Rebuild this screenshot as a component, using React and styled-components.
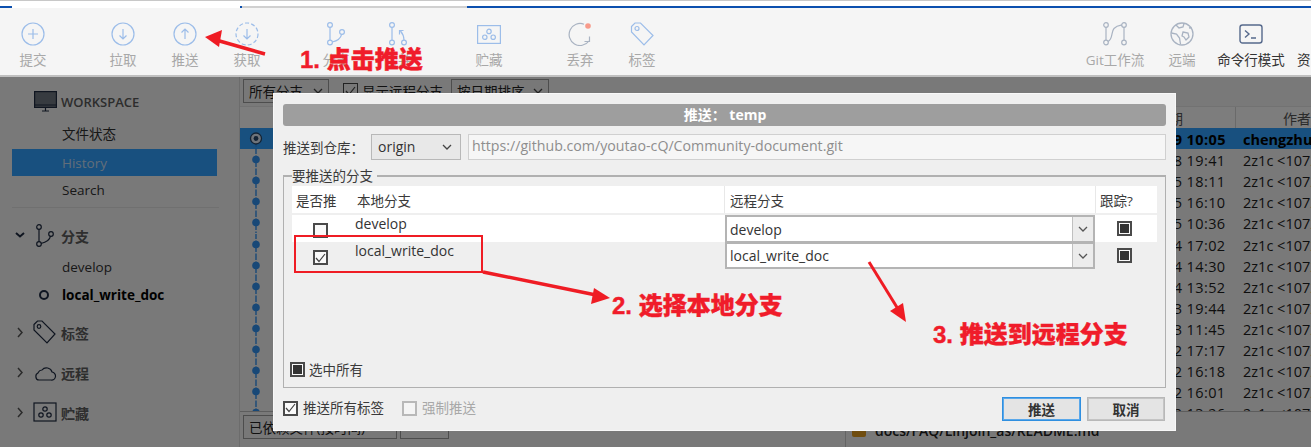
import React from "react";
import styled, { createGlobalStyle } from "styled-components";

const Global = createGlobalStyle`
  html, body { margin: 0; padding: 0; background: #f3f3f3; }
  body { width: 1311px; height: 447px; overflow: hidden; font-family: "Open Sans", "Noto Sans CJK SC", sans-serif; font-size: 13px; color: #333; }
  * { box-sizing: border-box; }
`;

const Frame = styled.div`position: relative; width: 1311px; height: 447px; overflow: hidden; display: flex; flex-direction: column;`;
const TopStrip = styled.div`height: 8px; flex: none; background: #fff; border-top: 1px solid #c8c8c8; display: flex; align-items: flex-end;`;
const Tab = styled.div`height: 2px; width: ${p => p.$w}px; flex: ${p => p.$grow ? 1 : "none"}; background: ${p => p.$c || "#0b4fae"};`;
const Toolbar = styled.div`height: 69px; flex: none; background: #f5f5f5; border-bottom: 2px solid #c0c0c0; display: flex; padding-left: 2px; overflow: hidden;`;
const ToolItem = styled.div`
  flex: none; width: ${p => p.$w || 62}px; margin-left: ${p => p.$ml || 0}px;
  display: flex; flex-direction: column; align-items: ${p => p.$start ? "flex-start" : "center"}; padding-top: 14px; padding-left: ${p => p.$start ? 9 : 0}px; white-space: nowrap;
  color: ${p => p.$on ? "#333" : "#a8a8a8"}; font-size: 13.5px; line-height: 20px;
  svg { display: block; margin-bottom: 4px; }
`;
const Spring = styled.div`flex: 1;`;

const Body = styled.div`flex: 1; display: flex; min-height: 0;`;
const Side = styled.aside`width: 240px; flex: none; border-right: 1px solid #d8d8d8; display: flex; flex-direction: column; padding-left: 12px; padding-right: 21px;`;
const WorkspaceHead = styled.div`height: 37px; margin-top: 6px; padding-left: 22px; display: flex; align-items: center; gap: 4px; color: #5a5a5a; font-weight: 600; font-size: 13px;`;
const SideLink = styled.div`height: 27px; margin-top: ${p => p.$mt || 0}px; display: flex; align-items: center; padding-left: 50px; width: 205px; background: ${p => p.$sel ? "#30a0fe" : "none"}; color: ${p => p.$bold ? "#000" : p.$sel ? "#c4dcf4" : "#303030"}; font-weight: ${p => p.$bold ? 700 : 400}; font-size: 13.5px; position: relative;`;
const CurrentDot = styled.span`position: absolute; left: 27px; top: 9px; width: 10px; height: 10px; border: 2px solid #1f2c44; border-radius: 50%;`;
const SideDivider = styled.div`height: 1px; background: #e0e0e0; margin-top: 4px; width: 207px;`;
const SideHead = styled.div`height: 30px; margin-top: ${p => p.$mt || 0}px; display: flex; align-items: center; color: #5c5c5c; font-weight: 700; font-size: 14px; white-space: nowrap;
  svg { flex: none; }
`;
const SideHeadText = styled.span`margin-left: 1px;`;

const Main = styled.main`flex: 1; display: flex; flex-direction: column; min-width: 0;`;
const FilterBar = styled.div`height: 29px; flex: none; display: flex; align-items: flex-start; padding: 2px 0 0 3px; font-size: 13.5px; color: #222;`;
const MiniSelect = styled.div`width: ${p => p.$w}px; height: 24px; margin-left: ${p => p.$ml || 0}px; border: 1px solid #9a9a9a; display: flex; align-items: center; justify-content: space-between; padding: 0 5px; background: #f0f0f0;`;
const HeadRow = styled.div`height: 22px; flex: none; background: #fafafa; border-top: 1px solid #e4e4e4; display: flex; font-size: 14px; color: #555; justify-content: flex-end; align-items: center;`;
const HeadCell = styled.div`width: ${p => p.$w}px; height: 100%; display: flex; align-items: center; justify-content: flex-end; padding-right: ${p => p.$pr || 0}px; border-left: ${p => p.$line ? "1px solid #d4d4d4" : "none"}; flex: none; overflow: hidden; white-space: nowrap;`;
const Rows = styled.div`height: 284px; flex: none; display: flex; flex-direction: column; overflow: hidden; border-bottom: 1px solid #bbb; position: relative;`;
const Row = styled.div`height: 21.1px; flex: none; display: flex; align-items: center; padding-left: 4px; background: ${p => p.$sel ? "#30a0fe" : "none"}; color: ${p => p.$sel ? "#000" : "#1c1c1c"}; font-weight: ${p => p.$sel ? 700 : 400}; font-size: 14.5px; white-space: nowrap;`;
const GraphCell = styled.div`width: 24px; flex: none; display: flex; justify-content: center;`;
const Spacer = styled.div`flex: 1;`;
const DateCell = styled.div`width: 63px; flex: none; overflow: hidden; padding-top: 2px; letter-spacing: .4px;`;
const AuthorCell = styled.div`width: 83px; padding: 2px 0 0 15px; flex: none; overflow: hidden;`;
const StatusBar = styled.div`flex: 1; display: flex; padding: 3px 0 0 3px; position: relative; font-size: 13.5px; color: #222;`;
const FileRef = styled.div`position: absolute; left: 605px; top: 0; bottom: 0; border-left: 1px solid #c8c8c8; padding: 11px 0 0 6px; display: flex; gap: 9px; align-items: flex-start; font-weight: 600; font-size: 14px; line-height: 16px; color: #222;`;
const FileTag = styled.span`width: 14px; height: 12px; margin-top: 2px; border-radius: 2px; background: #e09a1e; display: block;`;

const Scrim = styled.div`position: absolute; left: 0; right: 0; top: 77px; bottom: 0; background: rgba(0,0,0,.5);`;

const Dialog = styled.section`position: absolute; left: 273px; top: 93px; width: 903px; height: 338px; background: #efefef; border: 1px solid #f8f8f8; padding: 10px 9px 0 9px; display: flex; flex-direction: column; font-size: 13.5px; color: #3a3a3a;`;
const TitleBar = styled.div`height: 22px; flex: none; background: #9e9e9e; border-radius: 3px; color: #fff; font-weight: 700; font-size: 14px; line-height: 20px; display: flex; align-items: center; justify-content: center; padding: 0 0 1px 1px;`;
const RepoRow = styled.div`flex: none; height: 27px; margin-top: 7px; display: flex; align-items: center; white-space: nowrap;`;
const RepoLabel = styled.span`width: 88px; flex: none;`;
const RepoSelect = styled.div`width: 90px; height: 26px; flex: none; border: 1px solid #b8b8b8; background: #e8e8e8; display: flex; align-items: center; justify-content: space-between; padding: 0 8px 0 6px; color: #333; font-size: 14px;`;
const UrlBox = styled.div`flex: 1; height: 26px; margin-left: 7px; border: 1px solid #d0d0d0; background: #f6f6f6; display: flex; align-items: center; padding: 0 3px 3px; color: #8e8e8e; font-size: 14.2px;`;
const Group = styled.fieldset`flex: none; height: 219px; margin: 9px 0 0 0; padding: 0 8px 0 8px; border: 1px solid #b0b0b0; border-top-width: 2px; display: flex; flex-direction: column; min-inline-size: 0;`;
const GroupTitle = styled.legend`font-size: 13.5px; padding: 0 4px 0 0; line-height: 14px;`;
const TableHead = styled.div`height: 27px; margin-top: 3px; flex: none; background: #fff; display: flex; align-items: center;`;
const Cell = styled.div`width: ${p => p.$w}px; flex: none; padding-left: ${p => p.$pl || 0}px; height: 100%; display: flex; align-items: center; border-left: ${p => p.$line ? "1px solid #e8e8e8" : "none"}; white-space: nowrap;`;
const BranchRow = styled.div`height: 27px; margin-top: ${p => p.$mt || 0}px; flex: none; display: flex; background: ${p => p.$white ? "#fff" : "none"};`;
const CheckCell = styled.div`width: 63px; flex: none; display: flex; justify-content: center; padding: 8px 6px 0 0;`;
const NameCell = styled.div`width: 370px; flex: none; line-height: 18px; white-space: nowrap; color: #333; font-size: 14px;`;
const Combo = styled.div`width: 370px; height: 27px; flex: none; border: 2px solid #b4b4b4; border-bottom-width: ${p => p.$last ? 2 : 1}px; background: #fff; display: flex; align-items: center; justify-content: space-between; padding-left: 3px; color: #333; font-size: 14px;`;
const ComboArrow = styled.div`width: 21px; height: 100%; background: #ececec; border-left: 1px solid #c0c0c0; display: flex; align-items: center; justify-content: center;`;
const TrackCell = styled.div`flex: 1; display: flex; align-items: center; justify-content: center; padding-right: 4px;`;
const SelectAll = styled.div`margin-top: 90px; margin-left: -2px; display: flex; align-items: center; gap: 4px;`;
const Footer = styled.div`flex: 1; display: flex; align-items: flex-start; padding-top: 9px;`;
const CheckLabel = styled.label`display: flex; align-items: center; gap: 5px; margin-left: ${p => p.$ml || 0}px; margin-top: 3px; line-height: 16px; color: ${p => p.$off ? "#a8a8a8" : "#3a3a3a"};`;
const DlgButton = styled.button`width: ${p => p.$w || 79}px; height: 24px; margin-left: ${p => p.$ml || 0}px; margin-right: ${p => p.$mr || 0}px; background: #e4e4e4; border: 1px solid ${p => p.$primary ? "#2f8fe0" : "#b8b8b8"}; box-shadow: ${p => p.$primary ? "inset 0 0 0 1px #5aa8ea" : "inset 0 0 0 1px #c4c4c4"}; font: 700 13.5px "Open Sans", "Noto Sans CJK SC", sans-serif; color: #333; padding: 0;`;

const BoxCheck = styled.span`width: 15px; height: 15px; flex: none; border: 2px solid ${p => p.$off ? "#b8b8b8" : "#4a4a4a"}; background: ${p => p.$off ? "#f4f4f4" : "#fafafa"}; display: flex; align-items: center; justify-content: center;`;
const Square = styled.span`width: 9px; height: 9px; background: #333; display: block;`;
const FilterCheck = styled.span`width: 15px; height: 15px; margin: 4px 4px 0 14px; flex: none; border: 1.5px solid #444; background: #f0f0f0; display: flex; align-items: center; justify-content: center;`;
const FilterText = styled.span`width: 89px; margin-top: 2px; flex: none; white-space: nowrap; overflow: hidden;`;

const Note = styled.div`position: absolute; left: ${p => p.$x}px; top: ${p => p.$y}px; color: #f01c2a; font-weight: 900; font-size: 24px; line-height: 30px; white-space: nowrap; font-family: "Liberation Sans", "Noto Sans CJK SC", sans-serif; -webkit-text-stroke: .4px #f01c2a;`;
const RedBox = styled.div`position: absolute; left: 294px; top: 235px; width: 189px; height: 38px; border: 2px solid #ef1c24;`;
const ArrowLayer = styled.svg`position: absolute; left: 0; top: 0; pointer-events: none;`;

const blue = "#9cbde9";
const Ic = ({ children }) => <svg width="24" height="24" viewBox="0 0 24 24" fill="none" stroke={blue} strokeWidth="1.2">{children}</svg>;
const Chevron = ({ c = "#444" }) => <svg width="10" height="6" viewBox="0 0 10 6" fill="none" stroke={c} strokeWidth="1.3"><path d="M1 1l4 4 4-4" /></svg>;
const Tick = ({ c = "#444" }) => <svg width="11" height="10" viewBox="0 0 11 10" fill="none" stroke={c} strokeWidth="1.2"><path d="M1 5l3 3.5L10 1" /></svg>;

const dates = ["09 10:05","08 19:41","05 18:11","05 16:10","05 10:36","04 17:02","04 14:30","04 13:52","03 19:44","03 11:45","02 17:17","02 16:18","02 16:01","02 13:26"];

function Graph({ first }) {
  return (
    <svg width="14" height="21" viewBox="0 0 14 21" style={{ display: "block" }}>
      <path d={first ? "M7 14v7" : "M7 0v21"} stroke="#3090ee" strokeWidth="1.4" strokeDasharray="5 1.5" />
      {first
        ? <><circle cx="7" cy="10.5" r="5.5" fill="#dfe9f5" stroke="#26476a" strokeWidth="1.3" /><circle cx="7" cy="10.5" r="2.4" fill="#26476a" /></>
        : <circle cx="7" cy="10.5" r="3.8" fill="#3090ee" />}
    </svg>
  );
}

export default function App() {
  return (
    <Frame>
      <Global />
      <TopStrip>
        <Tab $w={12} />
        <Tab $w={228} $c="#fff" />
        <Tab $w={2} />
        <Tab $w={225} $c="#d0d0d0" />
        <Tab $grow />
      </TopStrip>
      <Toolbar>
        <ToolItem>
          <Ic><circle cx="12" cy="12" r="11" /><path d="M12 7v10M7 12h10" /></Ic>提交
        </ToolItem>
        <ToolItem $ml={28}>
          <Ic><circle cx="12" cy="12" r="11" /><path d="M12 7v10M8.5 13.5L12 17l3.500-3.500" /></Ic>拉取
        </ToolItem>
        <ToolItem>
          <Ic><circle cx="12" cy="12" r="11" /><path d="M12 17V7M8.500 10.500L12 7l3.500 3.500" /></Ic>推送
        </ToolItem>
        <ToolItem>
          <Ic><circle cx="12" cy="12" r="11" strokeDasharray="4 2.2" /><path d="M12 7v10M8.500 13.500L12 17l3.500-3.500" /></Ic>获取
        </ToolItem>
        <ToolItem $ml={27}>
          <Ic>
            <circle cx="6" cy="3" r="2.400" /><circle cx="6" cy="20.500" r="2.400" /><circle cx="18" cy="10" r="2.400" />
            <path d="M6 5.400v12.700M8.200 20c5-1 8.600-4 9.400-7.600" />
          </Ic>分支
        </ToolItem>
        <ToolItem>
          <Ic>
            <circle cx="6" cy="3" r="2.400" /><circle cx="6" cy="20.500" r="2.400" /><circle cx="18" cy="20.500" r="2.400" />
            <path d="M6 5.400v12.700M18 18c0-4-1-6-3.500-9M13.500 12.500V8.500h4" />
          </Ic>合并
        </ToolItem>
        <ToolItem $ml={29}>
          <Ic>
            <rect x=".6" y="3.600" width="22.800" height="17.800" />
            <circle cx="12" cy="9.400" r="2.200" /><circle cx="7.800" cy="15.200" r="2.200" /><circle cx="16.200" cy="15.200" r="2.200" />
          </Ic>贮藏
        </ToolItem>
        <ToolItem $ml={29}>
          <svg width="24" height="24" viewBox="0 0 24 24" fill="none" stroke="#a9b3c2" strokeWidth="1.2">
            <path d="M16 2.200A11 11 0 1 0 21 19" /><path d="M16.500 19.500H21.500V14.500" />
            <circle cx="20" cy="4" r="2.800" fill="#f79a8a" stroke="none" />
          </svg>丢弃
        </ToolItem>
        <ToolItem>
          <Ic>
            <path d="M1.500 4.500L5 1h5.500l12.500 12.500-9 9.500L1.500 10z" /><circle cx="7" cy="6.500" r="2" />
          </Ic>标签
        </ToolItem>
        <Spring />
        <ToolItem $w={70}>
          <svg width="24" height="24" viewBox="0 0 24 24" fill="none" stroke="#a9b3c2" strokeWidth="1.2">
            <circle cx="3" cy="3" r="2.300" /><circle cx="3" cy="20.500" r="2.300" /><circle cx="21" cy="3" r="2.300" /><circle cx="21" cy="20.500" r="2.300" />
            <path d="M3 5.300v13M21 5.300v13M5 19.500c5-2 3-10 6-13s5-3 8-3.500" />
          </svg>Git工作流
        </ToolItem>
        <ToolItem $w={64}>
          <svg width="24" height="24" viewBox="0 0 24 24" fill="none" stroke="#a9b3c2" strokeWidth="1.300">
            <circle cx="12" cy="12" r="11" />
            <path d="M6 3l3 3 4-1 1-3.500M1.500 11l5 1 3 4 1 6M13 10l5 1 1 4-3 3-2-3-2-1zM19 6l2.500-.5" />
          </svg>远端
        </ToolItem>
        <ToolItem $w={74} $on>
          <svg width="24" height="24" viewBox="0 0 24 24" fill="none" stroke="#56698c" strokeWidth="1.400">
            <rect x="1" y="3" width="22" height="18" rx="2.500" /><path d="M6 8.500l4 3.500-4 3.500M12 16h5" />
          </svg>命令行模式
        </ToolItem>
        <ToolItem $w={23} $on $start>
          <svg width="1" height="24" />资
        </ToolItem>
      </Toolbar>

      <Body>
        <Side>
          <WorkspaceHead>
            <svg width="23" height="21" viewBox="0 0 23 21" fill="none" stroke="#1e2a40" strokeWidth="1.200">
              <rect x=".6" y=".6" width="21.800" height="15.800" fill="#6f7780" /><path d="M.6 14h21.800M8 20h7M11.500 17v3" />
            </svg>
            <span>WORKSPACE</span>
          </WorkspaceHead>
          <SideLink $mt={-1}>文件状态</SideLink>
          <SideLink $mt={3} $sel>History</SideLink>
          <SideLink>Search</SideLink>
          <SideDivider />
          <SideHead $mt={13}>
            <svg width="48" height="26" viewBox="0 0 48 26" fill="none" stroke="#1e2a40" strokeWidth="1.200">
              <path d="M4 10l4 3.500L12 10" strokeWidth="2" />
              <circle cx="27" cy="4" r="2.300" /><circle cx="27" cy="21" r="2.300" /><circle cx="39" cy="11" r="2.300" />
              <path d="M27 6.300v12.400M29 20.500c5-1 8.800-4 9.500-7.300" />
            </svg>
            <SideHeadText>分支</SideHeadText>
          </SideHead>
          <SideLink $mt={2}>develop</SideLink>
          <SideLink $mt={1} $bold><CurrentDot />local_write_doc</SideLink>
          <SideHead $mt={10}>
            <svg width="48" height="26" viewBox="0 0 48 26" fill="none" stroke="#1e2a40" strokeWidth="1.200">
              <path d="M6 8l4 4.500L6 17" stroke="#555" strokeWidth="1.500" />
              <path d="M22 4.500L25.500 1H30l13 13-8 9-13-13z" /><circle cx="27" cy="6.500" r="1.800" />
            </svg>
            <SideHeadText>标签</SideHeadText>
          </SideHead>
          <SideHead $mt={10}>
            <svg width="48" height="26" viewBox="0 0 48 26" fill="none" stroke="#1e2a40" strokeWidth="1.200">
              <path d="M6 8l4 4.500L6 17" stroke="#555" strokeWidth="1.500" />
              <path d="M27 20h12a4 4 0 0 0 1-8c-1-4-7-6-10-2-3 0-3 1-4 3-3 1-3 7 1 7z" />
            </svg>
            <SideHeadText>远程</SideHeadText>
          </SideHead>
          <SideHead $mt={10}>
            <svg width="48" height="26" viewBox="0 0 48 26" fill="none" stroke="#1e2a40" strokeWidth="1.200">
              <path d="M6 8l4 4.500L6 17" stroke="#555" strokeWidth="1.500" />
              <rect x="22" y="3" width="22" height="18" />
              <circle cx="33" cy="9" r="2.200" /><circle cx="29" cy="15" r="2.200" /><circle cx="37" cy="15" r="2.200" />
            </svg>
            <SideHeadText>贮藏</SideHeadText>
          </SideHead>
        </Side>
        <Main>
          <FilterBar>
            <MiniSelect $w={86}>所有分支<Chevron /></MiniSelect>
            <FilterCheck><Tick /></FilterCheck>
            <FilterText>显示远程分支</FilterText>
            <MiniSelect $w={98}>按日期排序<Chevron /></MiniSelect>
          </FilterBar>
          <HeadRow>
            <HeadCell $w={87} $pr={52}>日期</HeadCell>
            <HeadCell $w={76} $line>作者</HeadCell>
          </HeadRow>
          <Rows>
            {dates.map((d, i) => (
              <Row key={d} $sel={i === 0}>
                <GraphCell><Graph first={i === 0} /></GraphCell>
                <Spacer />
                <DateCell>{d}</DateCell>
                <AuthorCell>{i === 0 ? "chengzhu.wu" : "2z1c <1072>"}</AuthorCell>
              </Row>
            ))}
          </Rows>
          <StatusBar>
            <MiniSelect $w={154}>已依赖文件(按时间)<Chevron /></MiniSelect>
            <MiniSelect $w={49} $ml={3} />
            <FileRef><FileTag />docs/FAQ/Linjoin_as/README.md</FileRef>
          </StatusBar>
        </Main>
      </Body>

      <Scrim />

      <Dialog>
        <TitleBar>推送： temp</TitleBar>
        <RepoRow>
          <RepoLabel>推送到仓库：</RepoLabel>
          <RepoSelect>origin<Chevron /></RepoSelect>
          <UrlBox>https://github.com/youtao-cQ/Community-document.git</UrlBox>
        </RepoRow>
        <Group>
          <GroupTitle>要推送的分支</GroupTitle>
          <TableHead>
            <Cell $w={65} $pl={4}>是否推</Cell>
            <Cell $w={367}>本地分支</Cell>
            <Cell $w={371} $line $pl={5}>远程分支</Cell>
            <Cell $w={62} $pl={4} $line>跟踪?</Cell>
          </TableHead>
          <BranchRow $white $mt={2}>
            <CheckCell><BoxCheck /></CheckCell>
            <NameCell>develop</NameCell>
            <Combo>develop<ComboArrow><Chevron c="#555" /></ComboArrow></Combo>
            <TrackCell><BoxCheck><Square /></BoxCheck></TrackCell>
          </BranchRow>
          <BranchRow>
            <CheckCell><BoxCheck><Tick /></BoxCheck></CheckCell>
            <NameCell>local_write_doc</NameCell>
            <Combo $last>local_write_doc<ComboArrow><Chevron c="#555" /></ComboArrow></Combo>
            <TrackCell><BoxCheck><Square /></BoxCheck></TrackCell>
          </BranchRow>
          <SelectAll><BoxCheck><Square /></BoxCheck>选中所有</SelectAll>
        </Group>
        <Footer>
          <CheckLabel><BoxCheck><Tick /></BoxCheck>推送所有标签</CheckLabel>
          <CheckLabel $ml={18} $off><BoxCheck $off />强制推送</CheckLabel>
          <Spring />
          <DlgButton $primary>推送</DlgButton>
          <DlgButton $ml={6} $mr={1} $w={78}>取消</DlgButton>
        </Footer>
      </Dialog>

      <RedBox />
      <Note $x={300} $y={45}>1. 点击推送</Note>
      <Note $x={612} $y={291}>2. 选择本地分支</Note>
      <Note $x={933} $y={320}>3. 推送到远程分支</Note>
      <ArrowLayer width="1311" height="447" viewBox="0 0 1311 447" fill="none" stroke="#ef1c24" strokeWidth="3.500">
        <path d="M265 54L216 40" />
        <path d="M205 37l17-7-3 17z" fill="#ef1c24" stroke="none" />
        <path d="M483 272L596 295" />
        <path d="M610 298l-19 6 3-16z" fill="#ef1c24" stroke="none" />
        <path d="M869 262L898 309" strokeWidth="3" />
        <path d="M906 322l-16-11 13-8z" fill="#ef1c24" stroke="none" />
      </ArrowLayer>
    </Frame>
  );
}
